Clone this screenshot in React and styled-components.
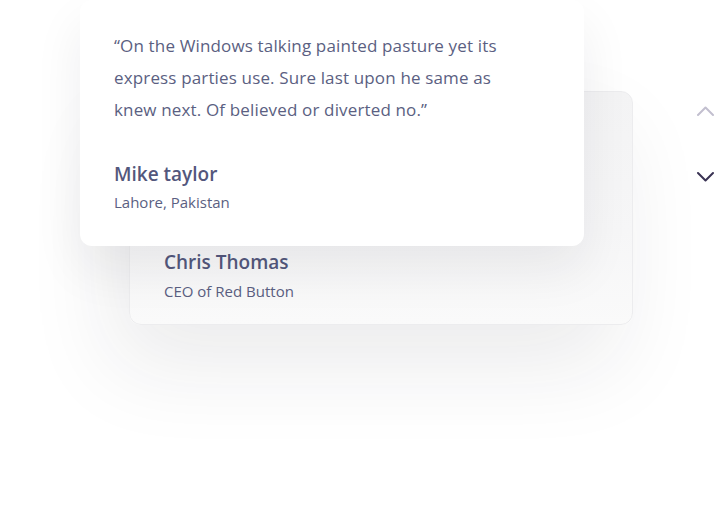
import React from "react";
import styled, { createGlobalStyle } from "styled-components";

const GlobalStyle = createGlobalStyle`
  html, body {
    margin: 0;
    padding: 0;
    background: #ffffff;
    overflow: hidden;
  }
  body {
    font-family: "Open Sans", "Liberation Sans", sans-serif;
  }
`;

const Section = styled.section`
  display: flex;
  width: 714px;
  height: 506px;
  overflow: hidden;
`;

const Stack = styled.div`
  display: grid;
  width: 696px;
  flex-shrink: 0;
  align-items: start;
`;

const Card = styled.div`
  grid-area: 1 / 1;
  box-sizing: border-box;
  width: 504px;
  border-radius: 12px;
  margin-left: ${(p) => (p.back ? "129px" : "80px")};
  margin-top: ${(p) => (p.back ? "91px" : "0")};
  padding: ${(p) => (p.back ? "0 34px 23px 34px" : "30px 34px 34px 34px")};
  min-height: ${(p) => (p.back ? "234px" : "auto")};
  z-index: ${(p) => (p.back ? 1 : 2)};
  display: flex;
  flex-direction: column;
  justify-content: flex-end;
  border: ${(p) => (p.back ? "1px solid #ececee" : "none")};
  background: ${(p) =>
    p.back ? "linear-gradient(180deg, #f3f3f4 0%, #f6f6f7 60%, #fafafa 100%)" : "#ffffff"};
  box-shadow: ${(p) =>
    p.back
      ? "-16px 40px 90px rgba(30, 30, 40, 0.09)"
      : "0 24px 50px rgba(30, 30, 40, 0.07)"};
`;

const Quote = styled.p`
  margin: 0 0 36px 0;
  font-size: 17px;
  line-height: 32px;
  letter-spacing: 0.15px;
  color: #5b5f82;
`;

const Name = styled.h4`
  margin: 0;
  font-size: 19px;
  line-height: 24px;
  font-weight: 600;
  color: #53577c;
`;

const Role = styled.span`
  display: block;
  margin-top: ${(p) => (p.back ? "7px" : "6px")};
  font-size: 15px;
  line-height: 20px;
  color: #5b5f82;
`;

const Nav = styled.div`
  display: flex;
  flex-direction: column;
  gap: 44px;
  padding-top: 102px;
  flex-shrink: 0;
`;

const Arrow = styled.button`
  display: block;
  width: 20px;
  height: 20px;
  padding: 0;
  border: none;
  background: none;
  cursor: pointer;
  color: ${(p) => (p.active ? "#3a3354" : "#c2bfcf")};
`;

const Chevron = ({ up }) => (
  <svg width="20" height="20" viewBox="0 0 20 20" fill="none">
    <path
      d={up ? "M2 13 L9.5 5.5 L17 13" : "M2 7 L9.5 14.5 L17 7"}
      stroke="currentColor"
      strokeWidth="2"
      strokeLinecap="round"
      strokeLinejoin="round"
    />
  </svg>
);

const testimonials = [
  {
    name: "Chris Thomas",
    role: "CEO of Red Button",
  },
];

export default function App() {
  return (
    <>
      <GlobalStyle />
      <Section>
        <Stack>
          {testimonials.map((t) => (
            <Card back key={t.name}>
              <Name>{t.name}</Name>
              <Role back>{t.role}</Role>
            </Card>
          ))}
          <Card>
            <Quote>
              “On the Windows talking painted pasture yet its
              <br />
              express parties use. Sure last upon he same as
              <br />
              knew next. Of believed or diverted no.”
            </Quote>
            <Name>Mike taylor</Name>
            <Role>Lahore, Pakistan</Role>
          </Card>
        </Stack>
        <Nav>
          <Arrow aria-label="previous">
            <Chevron up />
          </Arrow>
          <Arrow active aria-label="next">
            <Chevron />
          </Arrow>
        </Nav>
      </Section>
    </>
  );
}
